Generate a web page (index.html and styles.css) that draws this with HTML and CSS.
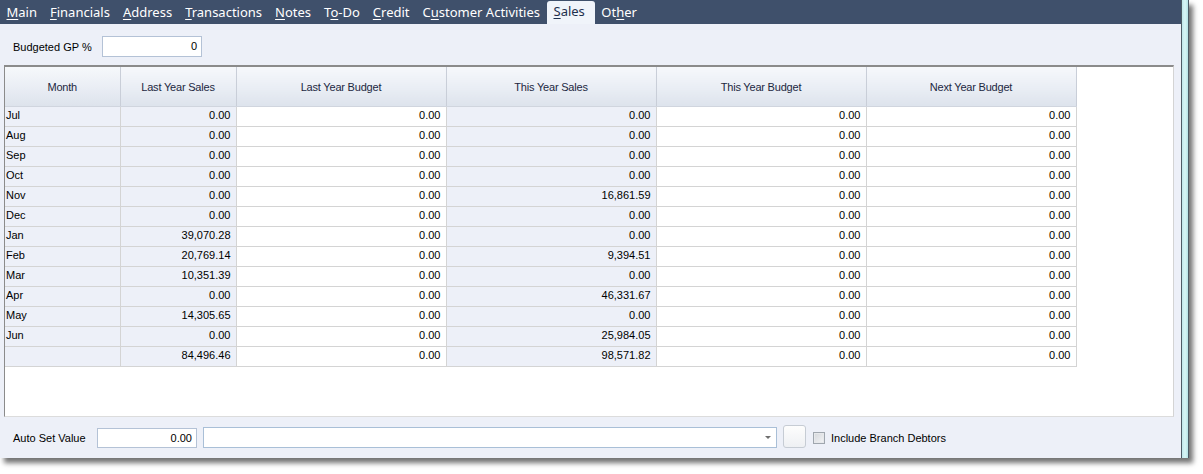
FILE: index.html
```html
<!DOCTYPE html>
<html>
<head>
<meta charset="utf-8">
<link rel="stylesheet" href="styles.css">
</head>
<body>
<div class="frame">
  <div class="window">
    <nav class="tabs">
      <span class="tab"><u>M</u>ain</span>
      <span class="tab"><u>F</u>inancials</span>
      <span class="tab"><u>A</u>ddress</span>
      <span class="tab"><u>T</u>ransactions</span>
      <span class="tab"><u>N</u>otes</span>
      <span class="tab">T<u>o</u>-Do</span>
      <span class="tab"><u>C</u>redit</span>
      <span class="tab">C<u>u</u>stomer Activities</span>
      <span class="tab active"><u>S</u>ales</span>
      <span class="tab">Ot<u>h</u>er</span>
    </nav>
    <div class="content">
      <div class="toprow">
        <span class="label">Budgeted GP %</span>
        <div class="input gp">0</div>
      </div>
      <div class="grid">
        <table>
          <thead>
            <tr>
              <th class="c1">Month</th>
              <th class="c2">Last Year Sales</th>
              <th class="c3">Last Year Budget</th>
              <th class="c3">This Year Sales</th>
              <th class="c3">This Year Budget</th>
              <th class="c3">Next Year Budget</th>
            </tr>
          </thead>
          <tbody>
            <tr><td class="m">Jul</td><td class="s">0.00</td><td>0.00</td><td class="s">0.00</td><td>0.00</td><td>0.00</td></tr>
            <tr><td class="m">Aug</td><td class="s">0.00</td><td>0.00</td><td class="s">0.00</td><td>0.00</td><td>0.00</td></tr>
            <tr><td class="m">Sep</td><td class="s">0.00</td><td>0.00</td><td class="s">0.00</td><td>0.00</td><td>0.00</td></tr>
            <tr><td class="m">Oct</td><td class="s">0.00</td><td>0.00</td><td class="s">0.00</td><td>0.00</td><td>0.00</td></tr>
            <tr><td class="m">Nov</td><td class="s">0.00</td><td>0.00</td><td class="s">16,861.59</td><td>0.00</td><td>0.00</td></tr>
            <tr><td class="m">Dec</td><td class="s">0.00</td><td>0.00</td><td class="s">0.00</td><td>0.00</td><td>0.00</td></tr>
            <tr><td class="m">Jan</td><td class="s">39,070.28</td><td>0.00</td><td class="s">0.00</td><td>0.00</td><td>0.00</td></tr>
            <tr><td class="m">Feb</td><td class="s">20,769.14</td><td>0.00</td><td class="s">9,394.51</td><td>0.00</td><td>0.00</td></tr>
            <tr><td class="m">Mar</td><td class="s">10,351.39</td><td>0.00</td><td class="s">0.00</td><td>0.00</td><td>0.00</td></tr>
            <tr><td class="m">Apr</td><td class="s">0.00</td><td>0.00</td><td class="s">46,331.67</td><td>0.00</td><td>0.00</td></tr>
            <tr><td class="m">May</td><td class="s">14,305.65</td><td>0.00</td><td class="s">0.00</td><td>0.00</td><td>0.00</td></tr>
            <tr><td class="m">Jun</td><td class="s">0.00</td><td>0.00</td><td class="s">25,984.05</td><td>0.00</td><td>0.00</td></tr>
            <tr><td class="m"></td><td class="s">84,496.46</td><td>0.00</td><td class="s">98,571.82</td><td>0.00</td><td>0.00</td></tr>
          </tbody>
        </table>
      </div>
      <div class="bottom">
        <span class="label">Auto Set Value</span>
        <div class="input asv">0.00</div>
        <div class="combo"><span class="arrow"></span></div>
        <div class="btn"></div>
        <span class="check"></span>
        <span class="label">Include Branch Debtors</span>
      </div>
    </div>
  </div>
  <div class="edge"></div>
</div>
</body>
</html>
```
FILE: styles.css
```css
html, body {
  margin: 0;
  padding: 0;
  background: #ffffff;
}
body {
  width: 1203px;
  height: 474px;
  overflow: hidden;
  font-family: "Liberation Sans", Arial, sans-serif;
}
.frame {
  display: flex;
  width: 1189px;
  height: 458px;
  box-shadow: 4px 5px 5px rgba(0, 0, 0, 0.55);
}
.window {
  width: 1181px;
  height: 458px;
  display: flex;
  flex-direction: column;
  background: #edf0f8;
}
.edge {
  width: 6px;
  height: 458px;
  border-left: 1px solid #4d5b66;
  border-right: 1px solid #4d5b66;
  background: linear-gradient(to right, #bfe6ea, #d8f6f6 50%, #b6e3e6);
}
.tabs {
  height: 24px;
  background: #3f506b;
  display: flex;
  align-items: flex-end;
  padding-left: 0;
  font-family: "Noto Sans", sans-serif;
  font-size: 13px;
  color: #ffffff;
}
.tab {
  height: 24px;
  line-height: 24px;
  padding: 0 6.5px;
  white-space: nowrap;
}
.tab u {
  text-decoration-thickness: 1px;
  text-underline-offset: 2px;
}
.tab.active {
  background: #f0f4fa;
  color: #1e2f4d;
  height: 23px;
  line-height: 20px;
  padding: 0 10px 0 7px;
  border-radius: 3px 3px 0 0;
  margin-left: 0;
  margin-right: 0;
}
.content {
  flex: 1;
  display: flex;
  flex-direction: column;
  padding: 0 7px 0 4px;
}
.label {
  font-size: 11px;
  color: #000000;
  white-space: nowrap;
}
.toprow {
  height: 41px;
  display: flex;
  align-items: center;
  padding: 4px 0 0 9px;
  box-sizing: border-box;
}
.toprow .label {
  width: 89px;
}
.input {
  height: 21px;
  box-sizing: border-box;
  border: 1px solid #b4c2d6;
  background: #ffffff;
  font-size: 11px;
  line-height: 19px;
  text-align: right;
  padding-right: 4px;
  color: #000;
}
.gp {
  width: 100px;
}
.grid {
  height: 352px;
  box-sizing: border-box;
  border-top: 2px solid #8b8b8b;
  border-left: 1px solid #8b8b8b;
  border-right: 1px solid #d4d4d4;
  border-bottom: 1px solid #dcdcdc;
  background: #ffffff;
}
table {
  border-collapse: collapse;
  table-layout: fixed;
  width: 1071px;
  font-size: 11px;
}
th {
  height: 39px;
  box-sizing: border-box;
  padding: 1px 0 0 0;
  font-weight: normal;
  color: #1c2741;
  background: linear-gradient(to bottom, #f6f8fb, #e9edf4 55%, #dde3ec);
  border-right: 1px solid #c9ced8;
  border-bottom: 1px solid #d0d5de;
  text-align: center;
  letter-spacing: -0.2px;
}
th.c1 { width: 115px; }
th.c2 { width: 116px; }
th.c3 { width: 210px; }
td {
  height: 20px;
  box-sizing: border-box;
  padding: 0 5px 0 2px;
  border-right: 1px solid #d4d4d4;
  border-bottom: 1px solid #d4d4d4;
  text-align: right;
  vertical-align: top;
  color: #000000;
  white-space: nowrap;
  line-height: 16px;
}
td.m {
  text-align: left;
  background: #edf0f8;
  padding-left: 1px;
}
td.s {
  background: #edf0f8;
}
.bottom {
  height: 41px;
  display: flex;
  align-items: center;
  padding-left: 9px;
}
.bottom > .label:first-child {
  width: 84px;
}
.asv {
  width: 100px;
  height: 20px;
  line-height: 18px;
}
.combo {
  position: relative;
  width: 574px;
  height: 21px;
  box-sizing: border-box;
  margin-left: 6px;
  border: 1px solid #a9bfd7;
  background: #ffffff;
}
.arrow {
  position: absolute;
  right: 5px;
  top: 8px;
  width: 0;
  height: 0;
  border-left: 3px solid transparent;
  border-right: 3px solid transparent;
  border-top: 3px solid #6f6f6f;
}
.btn {
  width: 23px;
  height: 23px;
  box-sizing: border-box;
  margin-left: 6px;
  margin-top: -2px;
  border: 1px solid #c6ccd4;
  border-radius: 3px;
  background: linear-gradient(to bottom, #fdfdfd, #eef0f3);
}
.check {
  width: 12px;
  height: 12px;
  box-sizing: border-box;
  margin-left: 7px;
  margin-right: 6px;
  border: 1px solid #9fa6ae;
  background: linear-gradient(135deg, #d4d7db, #f3f4f6);
  box-shadow: inset 0 0 0 1px #e6e8eb;
}
```
